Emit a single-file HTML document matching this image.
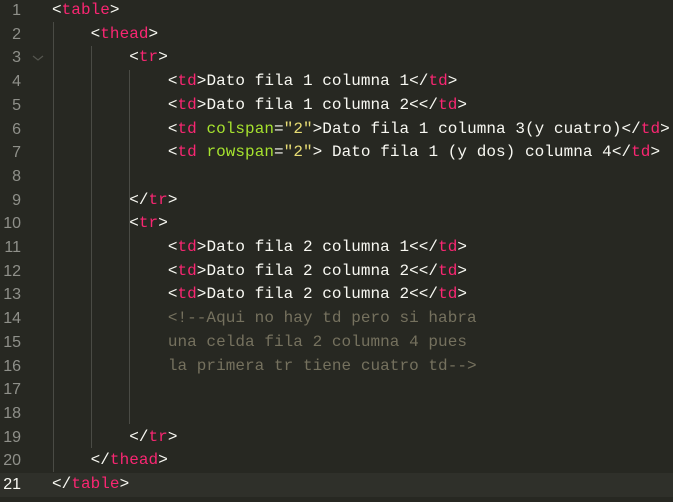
<!DOCTYPE html>
<html><head><meta charset="utf-8"><style>
html,body{margin:0;padding:0;background:#272822;width:673px;height:502px;overflow:hidden}
body{position:relative;font-family:"Liberation Mono",monospace;font-size:16px}
.ln{position:absolute;left:0;width:673px;height:23.7px;line-height:23.7px;white-space:pre;color:#f8f8f2}
.n{position:absolute;left:0;width:21px;text-align:right;color:#8f908a;font-family:"Liberation Sans",sans-serif;font-size:16px}
.c{position:absolute;left:52px;letter-spacing:0.05px}
.t{color:#f92672}.a{color:#a6e22e}.s{color:#e6db74}.m{color:#75715e}
.g{position:absolute;width:1px;background:#4a4b45}
.cur{background:#2f302a}
</style></head><body>
<div class="g" style="left:53px;top:22px;height:450px"></div>
<div class="g" style="left:91px;top:46px;height:402px"></div>
<div class="g" style="left:129px;top:70px;height:354px"></div>
<svg style="position:absolute;left:32px;top:54px" width="12" height="8"><path d="M1 2 L6 6 L11 2" fill="none" stroke="#55564f" stroke-width="1.2"/></svg>
<div class="ln" style="top:-1px"><span class="n">1</span><span class="c">&lt;<span class="t">table</span>&gt;</span></div>
<div class="ln" style="top:22.7px"><span class="n">2</span><span class="c">    &lt;<span class="t">thead</span>&gt;</span></div>
<div class="ln" style="top:46.4px"><span class="n">3</span><span class="c">        &lt;<span class="t">tr</span>&gt;</span></div>
<div class="ln" style="top:70.1px"><span class="n">4</span><span class="c">            &lt;<span class="t">td</span>&gt;Dato fila 1 columna 1&lt;/<span class="t">td</span>&gt;</span></div>
<div class="ln" style="top:93.8px"><span class="n">5</span><span class="c">            &lt;<span class="t">td</span>&gt;Dato fila 1 columna 2&lt;&lt;/<span class="t">td</span>&gt;</span></div>
<div class="ln" style="top:117.5px"><span class="n">6</span><span class="c">            &lt;<span class="t">td</span> <span class="a">colspan</span>=<span class="s">"2"</span>&gt;Dato fila 1 columna 3(y cuatro)&lt;/<span class="t">td</span>&gt;</span></div>
<div class="ln" style="top:141.2px"><span class="n">7</span><span class="c">            &lt;<span class="t">td</span> <span class="a">rowspan</span>=<span class="s">"2"</span>&gt; Dato fila 1 (y dos) columna 4&lt;/<span class="t">td</span>&gt;</span></div>
<div class="ln" style="top:164.9px"><span class="n">8</span></div>
<div class="ln" style="top:188.6px"><span class="n">9</span><span class="c">        &lt;/<span class="t">tr</span>&gt;</span></div>
<div class="ln" style="top:212.3px"><span class="n">10</span><span class="c">        &lt;<span class="t">tr</span>&gt;</span></div>
<div class="ln" style="top:236px"><span class="n">11</span><span class="c">            &lt;<span class="t">td</span>&gt;Dato fila 2 columna 1&lt;&lt;/<span class="t">td</span>&gt;</span></div>
<div class="ln" style="top:259.7px"><span class="n">12</span><span class="c">            &lt;<span class="t">td</span>&gt;Dato fila 2 columna 2&lt;&lt;/<span class="t">td</span>&gt;</span></div>
<div class="ln" style="top:283.4px"><span class="n">13</span><span class="c">            &lt;<span class="t">td</span>&gt;Dato fila 2 columna 2&lt;&lt;/<span class="t">td</span>&gt;</span></div>
<div class="ln" style="top:307.1px"><span class="n">14</span><span class="c m">            &lt;!--Aqui no hay td pero si habra</span></div>
<div class="ln" style="top:330.8px"><span class="n">15</span><span class="c m">            una celda fila 2 columna 4 pues</span></div>
<div class="ln" style="top:354.5px"><span class="n">16</span><span class="c m">            la primera tr tiene cuatro td--&gt;</span></div>
<div class="ln" style="top:378.2px"><span class="n">17</span></div>
<div class="ln" style="top:401.9px"><span class="n">18</span></div>
<div class="ln" style="top:425.6px"><span class="n">19</span><span class="c">        &lt;/<span class="t">tr</span>&gt;</span></div>
<div class="ln" style="top:449.3px"><span class="n">20</span><span class="c">    &lt;/<span class="t">thead</span>&gt;</span></div>
<div class="ln cur" style="top:473px"><span class="n" style="color:#f8f8f2">21</span><span class="c">&lt;/<span class="t">table</span>&gt;</span></div>
</body></html>
